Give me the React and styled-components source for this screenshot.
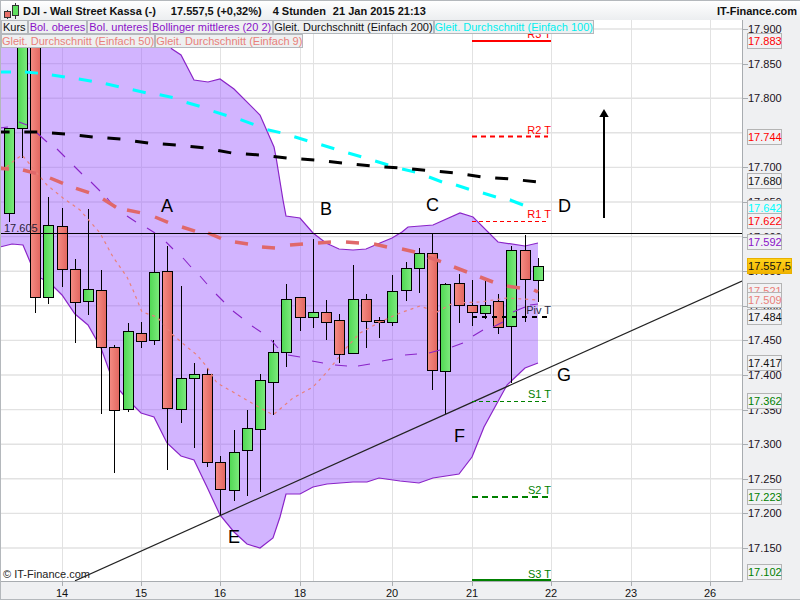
import React from "react";
import styled, { createGlobalStyle } from "styled-components";

const GlobalStyle = createGlobalStyle`
    html, body {
        margin: 0;
        padding: 0;
        background: #eff0f2;
    }
`;

const PageStyled = styled.div`
    width: 800px;
    height: 600px;
    box-sizing: border-box;
    display: flex;
    flex-direction: column;
    overflow: hidden;
    border: 1px solid #b4b8bc;
    border-right: none;
    background: #eff0f2;
    color: #111;
    font-family: "Liberation Sans", Arial, sans-serif;
`;

const TitleBar = styled.div`
    display: flex;
    align-items: center;
    height: 19px;
    flex: none;
    padding: 0 3px 0 2px;
    font-size: 11px;
    font-weight: bold;
    background: linear-gradient(#ffffff, #eceef0);
    white-space: nowrap;
`;

const TitleText = styled.span`
    margin-left: ${(p) => p.$gap || 0}px;
`;

const TitleBrand = styled(TitleText)`
    margin-left: auto;
`;

const ChartRow = styled.div`
    display: flex;
    height: 561px;
    flex: none;
`;

const Plot = styled.div`
    position: relative;
    width: 741px;
    background: #fff;
`;

const PlotSvg = styled.svg`
    display: block;
`;

const Legend = styled.div`
    position: absolute;
    left: 0;
    top: 0;
    width: 620px;
    display: flex;
    flex-wrap: wrap;
    font-size: 11px;
    line-height: 12px;
`;

const LegendTag = styled.span`
    box-sizing: border-box;
    height: 14px;
    padding: 0 ${(p) => (p.$tight ? 0 : 1)}px;
    background: #eef0f1;
    border: 1px solid #b4b8bc;
    white-space: nowrap;
    color: ${(p) => p.$color || "#111"};
`;

const LegendBreak = styled.div`
    flex-basis: 100%;
    height: 0;
`;

const Copyright = styled.span`
    position: absolute;
    left: 2px;
    bottom: 0;
    font-size: 11px;
    line-height: 13px;
    color: #222;
`;

const PriceAxis = styled.div`
    position: relative;
    flex: 1;
    border-left: 1px solid #a8acb0;
`;

const Tick = styled.div`
    position: absolute;
    left: 0;
    width: 5px;
    height: 1px;
    background: #a8acb0;
`;

const AxisLabel = styled.span`
    position: absolute;
    left: 5px;
    font-size: 11px;
    line-height: 14px;
    color: #1a1020;
`;

const PriceBadge = styled.div`
    position: absolute;
    left: 4px;
    box-sizing: border-box;
    width: ${(p) => (p.$current ? 45 : 35)}px;
    height: 16px;
    border: 1px solid ${(p) => (p.$current ? "#e8b000" : "#b4b4b4")};
    background: ${(p) =>
        p.$current ? "linear-gradient(#ffd21a, #f2b400)" : "#f1f2f4"};
    color: ${(p) => p.$color || "#111"};
    font-size: 11px;
    line-height: 14px;
    text-align: center;
    white-space: nowrap;
`;

const TimeAxis = styled.div`
    position: relative;
    flex: 1;
    width: 742px;
    border-top: 1px solid #a8acb0;
    box-sizing: border-box;
`;

const TimeTick = styled.div`
    position: absolute;
    top: 0;
    width: 1px;
    height: 4px;
    background: #a8acb0;
`;

const TimeLabel = styled.span`
    position: absolute;
    top: 5px;
    width: 20px;
    margin-left: -10px;
    text-align: center;
    font-size: 11px;
    line-height: 13px;
`;

const PointLetter = styled.text`
    font-family: "Liberation Sans", Arial, sans-serif;
    font-size: 18px;
    fill: #000;
`;

const LevelLabel = styled.text`
    font-family: "Liberation Sans", Arial, sans-serif;
    font-size: 11px;
    text-anchor: end;
    fill: ${(p) => p.$color};
`;

const PriceNote = styled.text`
    font-family: "Liberation Sans", Arial, sans-serif;
    font-size: 11px;
    fill: #2a2038;
`;

const PURPLE = "#8a24c8";
const SALMON = "#e0686a";
const RED = "#ff0000";
const GREEN = "#008000";

const priceY = (price) => 29 + (17900 - price) * 0.692;

const gridPrices = [
    17900, 17850, 17800, 17750, 17700, 17650, 17600, 17550, 17500, 17450,
    17400, 17350, 17300, 17250, 17200, 17150
];

const axisLabels = gridPrices.filter((p) => p !== 17750);

const gridDays = [62, 141, 220, 300, 313, 392, 472, 551, 631, 710];

const days = [
    [62, "14"],
    [141, "15"],
    [220, "16"],
    [300, "18"],
    [392, "20"],
    [472, "21"],
    [551, "22"],
    [631, "23"],
    [710, "26"]
];

// x, body top, body bottom, wick top, wick bottom, up
const candles = [
    [9, 128, 213, 128, 222, true],
    [22, 10, 128, 10, 158, true],
    [35, 10, 297, 10, 313, false],
    [48, 225, 297, 197, 304, true],
    [62, 226, 269, 208, 287, false],
    [75, 269, 302, 259, 343, false],
    [88, 289, 301, 209, 315, true],
    [101, 290, 347, 270, 414, false],
    [114, 347, 410, 345, 473, false],
    [128, 331, 409, 323, 412, true],
    [141, 333, 341, 322, 348, false],
    [154, 272, 340, 233, 345, true],
    [167, 271, 408, 246, 470, false],
    [181, 378, 409, 286, 423, true],
    [194, 374, 378, 363, 448, true],
    [207, 374, 462, 368, 467, false],
    [220, 462, 489, 456, 515, false],
    [234, 452, 490, 430, 501, true],
    [247, 428, 450, 410, 496, true],
    [260, 380, 429, 374, 492, true],
    [273, 352, 382, 340, 415, true],
    [286, 299, 352, 284, 367, true],
    [300, 297, 317, 297, 331, false],
    [313, 312, 317, 239, 328, true],
    [326, 312, 322, 300, 340, false],
    [339, 320, 354, 314, 363, false],
    [353, 299, 353, 265, 353, true],
    [366, 299, 321, 294, 348, false],
    [379, 320, 322, 317, 338, false],
    [392, 291, 322, 275, 326, true],
    [406, 268, 290, 262, 301, true],
    [419, 253, 268, 248, 293, true],
    [432, 253, 370, 233, 390, false],
    [445, 284, 371, 283, 414, true],
    [459, 283, 305, 274, 323, false],
    [472, 305, 312, 280, 326, false],
    [485, 305, 313, 280, 319, true],
    [498, 301, 327, 294, 334, false],
    [511, 250, 326, 246, 383, true],
    [525, 250, 279, 235, 322, false],
    [538, 266, 280, 258, 302, true]
];

const upperBand = [
    [150, 20], [172, 49], [181, 55], [194, 80], [208, 82], [220, 79],
    [234, 89], [260, 115], [274, 147], [276, 157], [283, 200], [286, 216],
    [300, 218], [313, 233], [326, 243], [339, 249], [353, 250], [366, 249],
    [380, 243], [392, 238], [402, 232], [408, 227], [433, 225], [460, 213],
    [473, 217], [498, 242], [525, 246], [538, 243]
];

const lowerBand = [
    [0, 247], [12, 244], [23, 245], [36, 276], [49, 282], [62, 295],
    [75, 314], [88, 325], [101, 348], [114, 384], [128, 400], [141, 413],
    [154, 417], [167, 443], [181, 456], [194, 460], [207, 487], [220, 515],
    [234, 532], [247, 544], [260, 548], [273, 538], [280, 517], [286, 494],
    [300, 494], [313, 487], [327, 484], [353, 482], [367, 482], [379, 478],
    [400, 481], [419, 483], [433, 478], [459, 474], [472, 457], [484, 427],
    [507, 385], [525, 368], [538, 363]
];

// start and end of each dash of the middle band
const middleBand = [
    [[0, 128], [8, 127]], [[19, 122], [27, 125]], [[37, 133], [47, 142]],
    [[57, 149], [65, 157]], [[74, 166], [82, 174]], [[91, 182], [100, 191]],
    [[107, 198], [115, 208]], [[127, 216], [136, 222]], [[147, 228], [155, 233]],
    [[166, 242], [173, 249]], [[183, 258], [191, 267]], [[200, 276], [207, 284]],
    [[216, 294], [224, 302]], [[233, 311], [242, 318]], [[252, 326], [261, 332]],
    [[271, 340], [278, 348]], [[288, 355], [300, 357]], [[312, 361], [323, 363]],
    [[335, 365], [347, 366]], [[358, 366], [370, 364]], [[382, 361], [393, 359]],
    [[405, 355], [417, 354]], [[429, 353], [440, 350]], [[452, 347], [463, 343]],
    [[473, 336], [483, 330]], [[493, 327], [503, 322]], [[513, 312], [525, 307]],
    [[530, 305], [538, 304]]
];

const ma9 = [
    [0, 167], [5, 168], [15, 160], [22, 155], [28, 162], [37, 173], [47, 185],
    [63, 198], [80, 210], [100, 233], [113, 257], [127, 277], [133, 290],
    [142, 312], [157, 317], [173, 335], [187, 347], [197, 355], [207, 367],
    [217, 383], [233, 392], [250, 402], [273, 415], [293, 398], [313, 387],
    [327, 372], [347, 347], [360, 333], [380, 322], [400, 313], [420, 306],
    [437, 312], [453, 303], [480, 302], [507, 298], [537, 300]
];

const ma50 = [
    [-4, 168], [23, 170], [35, 173], [50, 178], [62, 183], [75, 188], [90, 193],
    [103, 199], [115, 207], [127, 210], [142, 213], [155, 217], [167, 222],
    [182, 227], [194, 231], [208, 233], [220, 238], [235, 242], [248, 244],
    [262, 247], [276, 248], [290, 245], [303, 244], [318, 243], [332, 242],
    [346, 242], [360, 243], [374, 244], [387, 247], [402, 249], [415, 252],
    [428, 257], [442, 262], [454, 267], [467, 272], [480, 277], [493, 282],
    [507, 286], [520, 288], [534, 290], [538, 292]
];

const ma50Starts = [
    -4, 23, 50, 76, 103, 127, 155, 182, 208, 235, 262, 290, 318, 346, 374, 402,
    428, 454, 480, 507, 534
];

const ma100 = [
    [-3, 72], [25, 72], [37, 73], [52, 75], [65, 77], [79, 79], [107, 84],
    [120, 87], [134, 90], [147, 93], [162, 95], [175, 98], [188, 103],
    [202, 107], [215, 112], [228, 116], [242, 120], [255, 125], [268, 130],
    [282, 133], [295, 137], [308, 141], [322, 145], [335, 149], [348, 153],
    [362, 157], [375, 161], [388, 165], [402, 169], [415, 172], [429, 177],
    [442, 182], [456, 185], [468, 189], [483, 193], [496, 197], [510, 200],
    [523, 205], [538, 209]
];

const ma200 = [
    [-4, 132], [38, 132], [65, 134], [93, 137], [120, 139], [148, 143],
    [177, 145], [205, 148], [232, 153], [260, 155], [287, 158], [315, 160],
    [343, 163], [372, 166], [400, 168], [413, 169], [455, 173], [483, 177],
    [510, 179], [538, 182]
];

const everyStep = (from, step, to) => {
    const starts = [];
    for (let x = from; x < to; x += step) starts.push(x);
    return starts;
};

const ma100Starts = [...everyStep(-2, 26.94, 510), 510];
const ma200Starts = everyStep(-3.4, 27.7, 538);

const levels = [
    { name: "R3 T", y: 41, color: RED, width: 2, end: 551, labelY: 38 },
    { name: "R2 T", y: 136.5, color: RED, width: 2, dash: "5 4", end: 548, labelY: 133.5 },
    { name: "R1 T", y: 221.5, color: RED, width: 1, dash: "4 3", end: 548, labelY: 218 },
    { name: "Piv T", y: 317, color: "#000", width: 2, dash: "5 5", end: 548, labelY: 314, labelColor: "#2a2a40" },
    { name: "S1 T", y: 401.5, color: GREEN, width: 1, dash: "4 3", end: 548, labelY: 398 },
    { name: "S2 T", y: 497, color: GREEN, width: 2, dash: "6 4", end: 548, labelY: 494 },
    { name: "S3 T", y: 580, color: GREEN, width: 2, end: 551, labelY: 578 }
];

const letters = [
    ["A", 161, 212],
    ["B", 320, 215],
    ["C", 426, 211],
    ["D", 558, 212],
    ["E", 228, 543],
    ["F", 454, 442],
    ["G", 557, 381]
];

// later badges lie over earlier ones; 17.102 is held just above the plot's lower edge
const badges = [
    { text: "17.883", price: 17883, color: RED },
    { text: "17.744", price: 17744, color: RED },
    { text: "17.680", price: 17680 },
    { text: "17.642", price: 17642, color: "#00ffff" },
    { text: "17.622", price: 17622, color: RED },
    { text: "17.592", price: 17592, color: "#8a10c8" },
    { text: "17.521", price: 17521, color: "#e9807a" },
    { text: "17.509", price: 17509, color: "#e9807a" },
    { text: "17.484", price: 17484 },
    { text: "17.417", price: 17417 },
    { text: "17.362", price: 17362, color: GREEN },
    { text: "17.223", price: 17223, color: GREEN },
    { text: "17.102", price: 17116, color: GREEN },
    { text: "17.557,5", price: 17557.5, current: true }
];

const toPoints = (list) => list.map((p) => p.join(",")).join(" ");

const yAt = (points, x) => {
    for (let i = 1; i < points.length; i++) {
        const [x0, y0] = points[i - 1];
        const [x1, y1] = points[i];
        if (x <= x1) return y0 + ((y1 - y0) * (x - x0)) / (x1 - x0);
    }
    return points[points.length - 1][1];
};

// the chart spaces its dashes evenly along x, not along the line's length
function DashedLine({ points, starts, color, width }) {
    const last = points[points.length - 1][0];
    const d = starts
        .map((x) => {
            const end = Math.min(x + 13, last);
            return `M${x} ${yAt(points, x)}L${end} ${yAt(points, end)}`;
        })
        .join("");
    return <path d={d} fill="none" stroke={color} strokeWidth={width} />;
}

function Candle({ x, top, bottom, wickTop, wickBottom, up }) {
    return (
        <g shapeRendering="crispEdges">
            <line x1={x + 0.5} x2={x + 0.5} y1={wickTop} y2={wickBottom} stroke="#000" />
            <rect
                x={x - 4.5}
                y={top + 0.5}
                width={10}
                height={bottom - top}
                fill={up ? "url(#candleUp)" : "url(#candleDown)"}
                stroke="#000"
            />
        </g>
    );
}

function CandleIcon() {
    return (
        <svg width="17" height="19" viewBox="0 0 17 19">
            <line x1="4.5" x2="4.5" y1="9" y2="18" stroke="#333" />
            <rect x="1.5" y="10.5" width="6" height="6" fill="#e8706a" stroke="#333" />
            <line x1="12.5" x2="12.5" y1="2" y2="18" stroke="#333" />
            <rect x="9.5" y="4.5" width="6" height="10" fill="#5fe05f" stroke="#333" />
        </svg>
    );
}

function Chart() {
    return (
        <PlotSvg width="741" height="561" viewBox="1 20 741 561">
            <defs>
                <linearGradient id="candleUp">
                    <stop offset="0" stopColor="#4fd853" />
                    <stop offset="1" stopColor="#7eea7e" />
                </linearGradient>
                <linearGradient id="candleDown">
                    <stop offset="0" stopColor="#f58c84" />
                    <stop offset="1" stopColor="#e2665f" />
                </linearGradient>
            </defs>

            {gridPrices.map((p) => (
                <line key={p} x1="0" x2="742" y1={priceY(p)} y2={priceY(p)} stroke="#e2e2e2" strokeWidth="1.4" />
            ))}
            {gridDays.map((x) => (
                <line key={x} x1={x + 0.5} x2={x + 0.5} y1="20" y2="581" stroke="#e2e2e2" />
            ))}

            <polygon
                points={`0,20 ${toPoints(upperBand)} ${toPoints([...lowerBand].reverse())}`}
                fill="rgba(155, 88, 255, 0.45)"
            />
            <polyline points={toPoints(upperBand)} fill="none" stroke={PURPLE} strokeWidth="1.2" />
            <polyline points={toPoints(lowerBand)} fill="none" stroke={PURPLE} strokeWidth="1.2" />

            {candles.map(([x, top, bottom, wickTop, wickBottom, up]) => (
                <Candle key={x} x={x} top={top} bottom={bottom} wickTop={wickTop} wickBottom={wickBottom} up={up} />
            ))}

            <path
                d={middleBand.map(([a, b]) => `M${a[0]} ${a[1]}L${b[0]} ${b[1]}`).join("")}
                fill="none"
                stroke={PURPLE}
                strokeWidth="1.1"
            />
            <polyline points={toPoints(ma9)} fill="none" stroke="#e9807a" strokeWidth="1.2" strokeDasharray="3 4" />
            <DashedLine points={ma100} starts={ma100Starts} color="#00ffff" width={3} />
            <DashedLine points={ma200} starts={ma200Starts} color="#000" width={3} />
            <DashedLine points={ma50} starts={ma50Starts} color={SALMON} width={3.5} />

            <line x1="0" x2="742" y1="233.5" y2="233.5" stroke="#000" />
            <PriceNote x="4" y="232">17.605</PriceNote>
            <line x1="75" y1="580.8" x2="742" y2="281" stroke="#222" strokeWidth="1.2" />

            {levels.map((level) => (
                <g key={level.name}>
                    <line
                        x1="472"
                        x2={level.end}
                        y1={level.y}
                        y2={level.y}
                        stroke={level.color}
                        strokeWidth={level.width}
                        strokeDasharray={level.dash}
                    />
                    <LevelLabel x="551" y={level.labelY} $color={level.labelColor || level.color}>
                        {level.name}
                    </LevelLabel>
                </g>
            ))}

            <line x1="604" x2="604" y1="218" y2="115" stroke="#000" strokeWidth="2" />
            <polygon points="604,109 599.3,117 608.7,117" fill="#000" />

            {letters.map(([letter, x, y]) => (
                <PointLetter key={letter} x={x} y={y}>{letter}</PointLetter>
            ))}
        </PlotSvg>
    );
}

export default function App() {
    return (
        <PageStyled>
            <GlobalStyle />
            <TitleBar>
                <CandleIcon />
                <TitleText $gap={3}>DJI - Wall Street Kassa (-)</TitleText>
                <TitleText $gap={15}>17.557,5 (+0,32%)</TitleText>
                <TitleText $gap={11}>4 Stunden</TitleText>
                <TitleText $gap={7}>21 Jan 2015 21:13</TitleText>
                <TitleBrand>IT-Finance.com</TitleBrand>
            </TitleBar>
            <ChartRow>
                <Plot>
                    <Chart />
                    <Legend>
                        <LegendTag>Kurs</LegendTag>
                        <LegendTag $color="#8a10c8">Bol. oberes</LegendTag>
                        <LegendTag $color="#8a10c8">Bol. unteres</LegendTag>
                        <LegendTag $color="#8a10c8">Bollinger mittleres (20 2)</LegendTag>
                        <LegendTag $tight>Gleit. Durchschnitt (Einfach 200)</LegendTag>
                        <LegendTag $tight $color="#00eeee">Gleit. Durchschnitt (Einfach 100)</LegendTag>
                        <LegendBreak />
                        <LegendTag $tight $color="#e9807a">Gleit. Durchschnitt (Einfach 50)</LegendTag>
                        <LegendTag $tight $color="#e9807a">Gleit. Durchschnitt (Einfach 9)</LegendTag>
                    </Legend>
                    <Copyright>© IT-Finance.com</Copyright>
                </Plot>
                <PriceAxis>
                    {axisLabels.map((p) => (
                        <React.Fragment key={p}>
                            <Tick style={{ top: priceY(p) - 20 }} />
                            <AxisLabel style={{ top: priceY(p) - 27 }}>
                                {String(p).slice(0, 2)}.{String(p).slice(2)}
                            </AxisLabel>
                        </React.Fragment>
                    ))}
                    {badges.map((b) => (
                        <PriceBadge
                            key={b.text}
                            $color={b.color}
                            $current={b.current}
                            style={{ top: priceY(b.price) - 28 }}
                        >
                            {b.text}
                        </PriceBadge>
                    ))}
                </PriceAxis>
            </ChartRow>
            <TimeAxis>
                {days.map(([x, label]) => (
                    <React.Fragment key={label}>
                        <TimeTick style={{ left: x - 1 }} />
                        <TimeLabel style={{ left: x - 1 }}>{label}</TimeLabel>
                    </React.Fragment>
                ))}
            </TimeAxis>
        </PageStyled>
    );
}
